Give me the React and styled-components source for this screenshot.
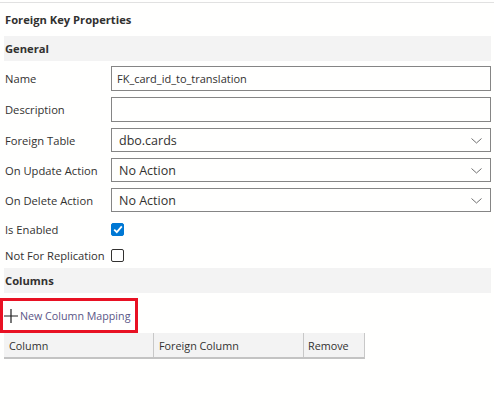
import React from "react";
import styled, { createGlobalStyle } from "styled-components";

const GlobalStyle = createGlobalStyle`
  html, body {
    margin: 0;
    padding: 0;
    background: #fffffe;
  }
  body {
    font-family: "Open Sans", "Noto Sans", sans-serif;
    font-size: 11.2px;
    color: #323130;
  }
`;

const Panel = styled.div`
  margin-top: 2px;
  border-top: 1px solid #e1e1e1;
  padding: 0 3px 0 4px;
  width: 494px;
  box-sizing: border-box;
`;

const Title = styled.div`
  height: 33px;
  display: flex;
  align-items: center;
  padding-left: 1px;
  font-weight: 700;
`;

const SectionHeader = styled.div`
  height: 25px;
  display: flex;
  align-items: center;
  padding-left: 1px;
  background: #f3f3f3;
  font-weight: 700;
`;

const Form = styled.div`
  display: flex;
  flex-direction: column;
  gap: 6px;
  padding-top: 5px;
`;

const Row = styled.div`
  display: grid;
  grid-template-columns: 107px 1fr;
  align-items: center;
  height: ${(p) => p.$h}px;
`;

const CheckRows = styled.div`
  display: flex;
  flex-direction: column;
  margin-top: -2px;
  & > ${Row} {
    height: 26px;
  }
`;

const Label = styled.div`
  padding-left: 1px;
  white-space: nowrap;
`;

const TextBox = styled.div`
  height: 100%;
  box-sizing: border-box;
  border: 1px solid #858585;
  display: flex;
  align-items: center;
  padding-left: 5px;
  font-size: 11px;
`;

const Select = styled(TextBox)`
  padding: 1px 8px 0 7px;
  justify-content: space-between;
  font-size: 12.5px;
`;

const Check = styled.div`
  width: 13px;
  height: 13px;
  box-sizing: border-box;
  border-radius: 2px;
  border: 1px solid ${(p) => (p.$on ? "#0078d4" : "#323130")};
  background: ${(p) => (p.$on ? "#0078d4" : "#fff")};
  display: flex;
  align-items: center;
  justify-content: center;
`;

const Toolbar = styled.div`
  padding-top: 5px;
  margin-left: -4px;
`;

const AddButton = styled.div`
  display: inline-flex;
  align-items: center;
  gap: 2px;
  height: 29px;
  padding: 0 5px 0 1px;
  border: 3px solid #e81123;
  color: #5a5687;
  font-size: 10.7px;
  white-space: nowrap;
  svg {
    flex-shrink: 0;
  }
`;

const Table = styled.div`
  display: grid;
  grid-template-columns: 149px 150px 61px;
  width: 360px;
  background: #f3f3f3;
  border-bottom: 2px solid #c3c3c3;
  border-right: 1px solid #c8c8c8;
  font-size: 10.8px;
`;

const HeadCell = styled.div`
  height: 24px;
  display: flex;
  align-items: center;
  padding-left: ${(p) => p.$pl || 5}px;
  border-left: ${(p) => (p.$first ? "none" : "1px solid #c8c8c8")};
`;

const Chevron = () => (
  <svg width="11" height="6" viewBox="0 0 11 6">
    <path d="M0.5 0.5 L5.5 5 L10.5 0.5" fill="none" stroke="#6f6f6f" strokeWidth="1" />
  </svg>
);

const CheckMark = () => (
  <svg width="10" height="9" viewBox="0 0 10 9">
    <path d="M1.2 4.6 L3.8 7.2 L8.8 1.4" fill="none" stroke="#fff" strokeWidth="1.8" />
  </svg>
);

const Plus = () => (
  <svg width="14" height="14" viewBox="0 0 14 14">
    <path d="M7 0 V14 M0 7 H14" stroke="#1f1f1f" strokeWidth="1.2" />
  </svg>
);

const fields = [
  { label: "Name", value: "FK_card_id_to_translation" },
  { label: "Description", value: "" },
];

const selects = [
  { label: "Foreign Table", value: "dbo.cards" },
  { label: "On Update Action", value: "No Action" },
  { label: "On Delete Action", value: "No Action" },
];

export default function App() {
  return (
    <>
      <GlobalStyle />
      <Panel>
        <Title>Foreign Key Properties</Title>
        <SectionHeader>General</SectionHeader>
        <Form>
          {fields.map((f) => (
            <Row key={f.label} $h={25}>
              <Label>{f.label}</Label>
              <TextBox>{f.value}</TextBox>
            </Row>
          ))}
          {selects.map((s) => (
            <Row key={s.label} $h={24}>
              <Label>{s.label}</Label>
              <Select>
                <span>{s.value}</span>
                <Chevron />
              </Select>
            </Row>
          ))}
          <CheckRows>
            <Row>
              <Label>Is Enabled</Label>
              <Check $on>
                <CheckMark />
              </Check>
            </Row>
            <Row>
              <Label>Not For Replication</Label>
              <Check />
            </Row>
          </CheckRows>
        </Form>
        <SectionHeader>Columns</SectionHeader>
        <Toolbar>
          <AddButton>
            <Plus />
            New Column Mapping
          </AddButton>
        </Toolbar>
        <Table>
          <HeadCell $first>Column</HeadCell>
          <HeadCell>Foreign Column</HeadCell>
          <HeadCell $pl={4}>Remove</HeadCell>
        </Table>
      </Panel>
    </>
  );
}
